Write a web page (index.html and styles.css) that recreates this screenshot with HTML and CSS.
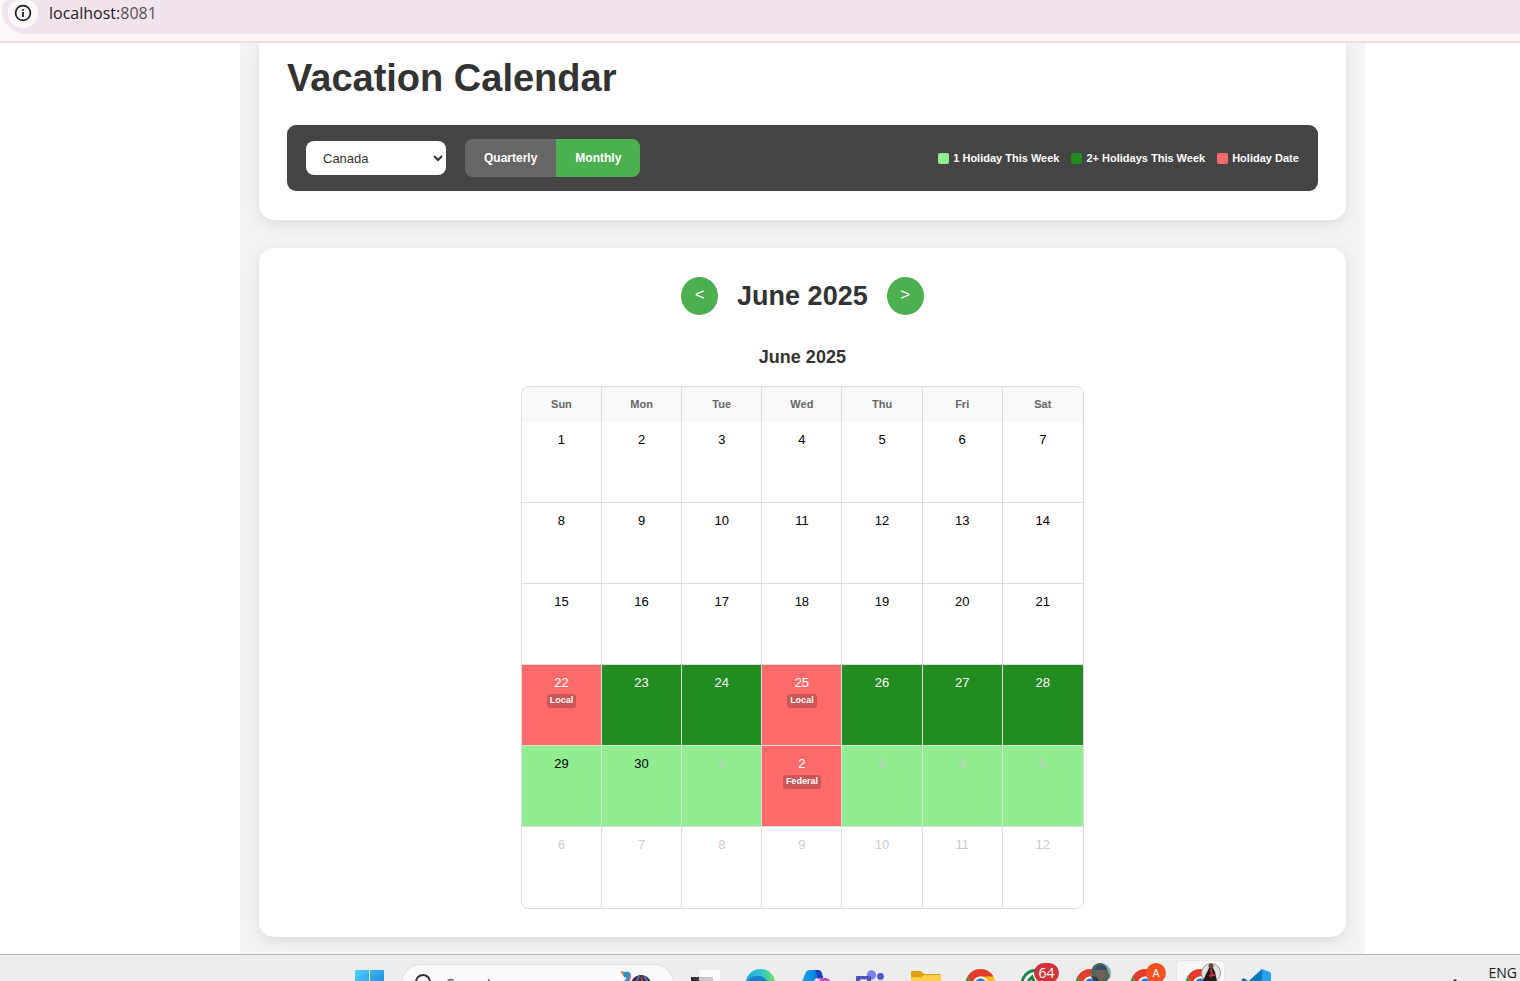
FILE: index.html
```html
<!DOCTYPE html>
<html lang="en">
<head>
<meta charset="utf-8">
<title>Vacation Calendar</title>
<link rel="stylesheet" href="styles.css">
</head>
<body>
<header class="browser-bar">
  <div class="address">
    <button class="site-info" type="button" aria-label="Site information">
      <svg width="18" height="18" viewBox="0 0 18 18"><circle cx="9" cy="9" r="7.4" fill="none" stroke="#1f1a1e" stroke-width="1.7"/><path d="M9 8v5M9 5v1.8" stroke="#1f1a1e" stroke-width="1.8"/></svg>
    </button>
    <span class="url">localhost:<span class="port">8081</span></span>
  </div>
</header>

<main class="viewport">
  <div class="container">
    <section class="card card-top">
      <h1 class="title">Vacation Calendar</h1>
      <div class="toolbar">
        <div class="controls">
          <select class="country" aria-label="Country"><option>Canada</option></select>
          <div class="toggle">
            <button type="button" class="toggle-btn">Quarterly</button>
            <button type="button" class="toggle-btn active">Monthly</button>
          </div>
        </div>
        <ul class="legend">
          <li><span class="swatch light"></span>1 Holiday This Week</li>
          <li><span class="swatch dark"></span>2+ Holidays This Week</li>
          <li><span class="swatch red"></span>Holiday Date</li>
        </ul>
      </div>
    </section>

    <section class="card card-calendar">
      <div class="month-nav">
        <button type="button" class="nav-btn" aria-label="Previous month">&lt;</button>
        <h2 class="month">June 2025</h2>
        <button type="button" class="nav-btn" aria-label="Next month">&gt;</button>
      </div>
      <h3 class="submonth">June 2025</h3>
      <table class="calendar">
        <thead><tr><th>Sun</th><th>Mon</th><th>Tue</th><th>Wed</th><th>Thu</th><th>Fri</th><th>Sat</th></tr></thead>
        <tbody>
          <tr><td>1</td><td>2</td><td>3</td><td>4</td><td>5</td><td>6</td><td>7</td></tr>
          <tr><td>8</td><td>9</td><td>10</td><td>11</td><td>12</td><td>13</td><td>14</td></tr>
          <tr><td>15</td><td>16</td><td>17</td><td>18</td><td>19</td><td>20</td><td>21</td></tr>
          <tr class="week-dark"><td class="holiday">22<span class="badge">Local</span></td><td>23</td><td>24</td><td class="holiday">25<span class="badge">Local</span></td><td>26</td><td>27</td><td>28</td></tr>
          <tr class="week-light"><td>29</td><td>30</td><td class="other">1</td><td class="holiday">2<span class="badge">Federal</span></td><td class="other">3</td><td class="other">4</td><td class="other">5</td></tr>
          <tr><td class="other">6</td><td class="other">7</td><td class="other">8</td><td class="other">9</td><td class="other">10</td><td class="other">11</td><td class="other">12</td></tr>
        </tbody>
      </table>
    </section>
  </div>
</main>

<svg width="0" height="0" class="defs">
  <defs>
    <linearGradient id="win" x1="0" y1="0" x2="1" y2="1"><stop offset="0" stop-color="#4fd0fb"/><stop offset="1" stop-color="#0a72d4"/></linearGradient>
    <linearGradient id="edge" x1="0" y1="0" x2="1" y2="0"><stop offset="0" stop-color="#1fa5dc"/><stop offset=".5" stop-color="#2fc3d0"/><stop offset="1" stop-color="#6be05a"/></linearGradient>
    <linearGradient id="cop" x1="0" y1="0" x2="1" y2="0"><stop offset="0" stop-color="#18a5e6"/><stop offset=".6" stop-color="#0b8ae4"/><stop offset="1" stop-color="#1c3fc4"/></linearGradient>
    <linearGradient id="cop2" x1="0" y1="0" x2="1" y2="0"><stop offset="0" stop-color="#e65fb0"/><stop offset="1" stop-color="#a44be8"/></linearGradient>
    <linearGradient id="task" x1="0" y1="0" x2="1" y2="0"><stop offset="0" stop-color="#2b2b2b"/><stop offset="1" stop-color="#6a6a6a"/></linearGradient>
    <g id="chrome">
      <circle cx="27.5" cy="29" r="15" fill="#fbbf16"/>
      <path d="M14.500 21.500A15 15 0 0 1 40.500 21.500H27.500A7.500 7.500 0 0 0 21 32.800z" fill="#e33b2e"/>
      <path d="M14.500 21.500L21 32.800L27.500 44A15 15 0 0 1 14.500 21.500z" fill="#26a047"/>
      <circle cx="27.500" cy="29" r="7.500" fill="#fff"/><circle cx="27.500" cy="29" r="5.800" fill="#2f7de9"/>
    </g>
  </defs>
</svg>

<footer class="taskbar">
  <svg class="slot" viewBox="0 0 55 48"><path d="M13 16q0-1 1-1h13v14H13zM28 15H41q1 0 1 1v13H28zM13 30h14v14H13zM28 30H42v14H28z" fill="url(#win)"/></svg>
  <label class="search">
    <svg width="20" height="24" viewBox="0 0 20 24"><circle cx="10" cy="13" r="7" fill="none" stroke="#333" stroke-width="2"/><path d="M5 18l-4 5" stroke="#333" stroke-width="2"/></svg>
    <input class="search-input" type="text" placeholder="Search">
    <svg width="34" height="36" viewBox="0 0 34 36"><path d="M1 2l6 1 4 1v5l-6-1z" fill="#b58763"/><path d="M5 4q5-4 7 2 0 6-4 8v10H5V12l3-3-3-1z" fill="#1799cf"/><path d="M9 4l3 4-2 4z" fill="#e2546f"/><ellipse cx="22" cy="18" rx="11" ry="12" fill="#3a2a48"/><path d="M20 7l-4 10M25 7l5 8" stroke="#5274bd" stroke-width="2"/><path d="M22 8l2 6" stroke="#9a4f49" stroke-width="2"/></svg>
  </label>
  <svg class="slot" viewBox="0 0 55 48"><path d="M13 22h24v14H13z" fill="url(#task)"/><path d="M21 15h21v20H31V25H21z" fill="#fbfbfb"/><path d="M21 22h14v12H21z" fill="#cacaca"/></svg>
  <svg class="slot" viewBox="0 0 55 48"><circle cx="27.500" cy="29" r="15" fill="url(#edge)"/><path d="M13 27Q18 20 26 21Q35 22 36 31L28 30Q23 24 20 33L22 42Q12 38 13 27z" fill="#1482cf"/><circle cx="29" cy="30" r="5" fill="#1467b5"/></svg>
  <svg class="slot" viewBox="0 0 55 48"><path d="M13 30q3-9 5-13 1-2 4-2h8q3 0 4 4l1 4h-5q-3 0-4 4l-2 9H14q-2 0-1-6z" fill="url(#cop)"/><path d="M27 15h3q3 0 4 4l1 4h-5z" fill="#1642bd"/><path d="M30 23h8q4 0 4 5l-3 13H24l4-14z" fill="url(#cop2)"/><path d="M27 25l5-1-2 7-5 1z" fill="#f4edf6"/></svg>
  <svg class="slot" viewBox="0 0 55 48"><circle cx="28.500" cy="20" r="4.700" fill="#7b83eb"/><circle cx="37.500" cy="21.500" r="3.400" fill="#5059c9"/><path d="M23 26h13v14H23z" fill="#7b83eb"/><path d="M35 26h7v10h-7z" fill="#5059c9"/><rect x="13" y="21" width="15" height="16" rx="1" fill="#4b53bc"/><path d="M17 25.500h7M20.500 25v8" stroke="#fff" stroke-width="2"/></svg>
  <svg class="slot" viewBox="0 0 55 48"><path d="M13 17q0-1 1-1h8q1 0 2 1l2 2h15q2 0 2 2v6H13z" fill="#dfa000"/><path d="M13 22h10q2 0 3-2h17v20H13z" fill="#ffcf48"/></svg>
  <svg class="slot" viewBox="0 0 55 48"><use href="#chrome"/></svg>
  <svg class="slot" viewBox="0 0 55 48"><circle cx="27.500" cy="29" r="13.500" fill="#fff" stroke="#15854c" stroke-width="3"/><path d="M20 26l4-4 3 6-2 2q2 4 6 6" fill="none" stroke="#15854c" stroke-width="3"/><rect x="26" y="8" width="25" height="20" rx="10" fill="#d13438"/><text class="count" x="38.500" y="23" text-anchor="middle">64</text></svg>
  <svg class="slot" viewBox="0 0 55 48"><use href="#chrome"/><circle cx="38" cy="18" r="10" fill="#8ba9b2"/><path d="M28 17q1-9 10-9 6 2 7 9l2 4q-3 7-9 7-9-2-10-11z" fill="#4e6950"/><path d="M31 15q2-5 8-5 4 1 5 5z" fill="#354e70"/><path d="M32 15h10v6l-4 4-5-4z" fill="#72605a"/><path d="M28 21l6 1 3 6q-6 0-9-7z" fill="#293b52"/></svg>
  <svg class="slot" viewBox="0 0 55 48"><use href="#chrome"/><circle cx="38" cy="18" r="10" fill="#f4511e"/><text class="initial" x="38" y="22" text-anchor="middle">A</text></svg>
  <svg class="slot" viewBox="0 0 55 48"><rect x="3.500" y="5.500" width="48" height="46" rx="4" fill="#f8f8f8" stroke="#e6e6e6"/><use href="#chrome"/><circle cx="38" cy="18" r="9.500" fill="#e5e3e2" stroke="#999"/><path d="M36 13l-4 8-2 5h14l-2-9-2-4z" fill="#25191c"/><circle cx="38" cy="11" r="2.500" fill="#6b453c"/><path d="M38 14l1 7M36 21l6-1" stroke="#bd3647" stroke-width="2"/></svg>
  <svg class="slot" viewBox="0 0 55 48"><path d="M34 14l8 3q1 1 1 2v20l-9 5-5-5V23z" fill="#25a4ed"/><path d="M34 14v10L18 37l-5-4z" fill="#0878bd"/><path d="M13 25l3-2 16 12v8z" fill="#0878bd"/></svg>
  <div class="tray">
    <svg width="12" height="8" viewBox="0 0 12 8"><path d="M1 6l5-5 5 5" fill="none" stroke="#222" stroke-width="1.500"/></svg>
    <span class="lang">ENG</span>
  </div>
</footer>
</body>
</html>
```

FILE: styles.css
```css
* { box-sizing: border-box; }

body {
  margin: 0;
  height: 100vh;
  display: flex;
  flex-direction: column;
  overflow: hidden;
  background: #fff;
  font-family: "Liberation Sans", Arial, sans-serif;
  color: #333;
}

button, select, input { font-family: inherit; }
h1, h2, h3, ul { margin: 0; padding: 0; }

.browser-bar {
  flex: none;
  height: 43px;
  padding-left: 2px;
  background: #fff8f8;
  border-bottom: 2px solid #efdbe6;
}
.address {
  height: 34px;
  display: flex;
  align-items: flex-start;
  gap: 11px;
  padding-left: 6px;
  background: #f1e4ee;
  border-radius: 8px 0 0 24px;
}
.site-info {
  width: 30px;
  height: 28px;
  padding: 0 0 2px;
  display: grid;
  place-items: center;
  border: 0;
  border-radius: 12px 12px 15px 15px;
  background: #fff8f8;
}
.url {
  font: 16px/26px "Open Sans", "Noto Sans", sans-serif;
  color: #1f1a1e;
}
.port { color: #5d5159; }

.viewport {
  flex: 1;
  min-height: 0;
  overflow: hidden;
}
.container {
  width: 74%;
  min-height: 100%;
  margin-left: 240px;
  padding: 0 19px 17px;
  background: #f4f4f4;
}
.card {
  padding: 29px 28px 28px;
  background: #fff;
  border-radius: 15px;
  box-shadow: 0 4px 15px rgba(0, 0, 0, 0.1);
}
.card-top {
  margin-bottom: 28px;
  padding-top: 13px;
  padding-bottom: 29px;
  border-radius: 0 0 15px 15px;
}
.title {
  margin-bottom: 25px;
  font-size: 38px;
  line-height: 44px;
}

.toolbar {
  display: flex;
  align-items: center;
  justify-content: space-between;
  padding: 14px 19px;
  background: #444;
  border-radius: 9px;
}
.controls { display: flex; align-items: center; gap: 19px; }
.country {
  width: 140px;
  height: 34px;
  padding: 0 2px 0 13px;
  border: 0;
  border-radius: 8px;
  background: #fff;
  color: #333;
  font-size: 13px;
}
.toggle {
  display: flex;
  overflow: hidden;
  border-radius: 8px;
  background: #666;
}
.toggle-btn {
  height: 38px;
  padding: 0 19px;
  border: 0;
  background: #666;
  color: #fff;
  font-size: 12px;
  font-weight: bold;
}
.toggle-btn.active { background: #4caf50; }

.legend {
  display: flex;
  gap: 12px;
  list-style: none;
  color: #fff;
  font-size: 11px;
  font-weight: bold;
}
.legend li { display: flex; align-items: center; gap: 4px; }
.swatch { width: 11px; height: 11px; border-radius: 2px; }
.swatch.light { background: #90ee90; }
.swatch.dark { background: #228b22; }
.swatch.red { background: #ff6b6b; }

.month-nav {
  display: flex;
  align-items: center;
  justify-content: center;
  gap: 19px;
  margin-bottom: 31px;
}
.month { font-size: 27px; line-height: 38px; }
.nav-btn {
  width: 37px;
  height: 38px;
  padding: 0 0 2px;
  border: 0;
  border-radius: 50%;
  background: #4caf50;
  color: #fff;
  font-size: 17px;
}
.submonth {
  margin-bottom: 18px;
  font-size: 18px;
  line-height: 22px;
  text-align: center;
}

.calendar {
  width: 563px;
  max-width: 100%;
  margin: 0 auto;
  table-layout: fixed;
  border: 1px solid #ddd;
  border-radius: 8px;
  border-collapse: separate;
  border-spacing: 0;
  overflow: hidden;
  text-align: center;
}
.calendar th {
  height: 35px;
  padding: 0 0 2px;
  background: #f8f9fa;
  border-right: 1px solid #ddd;
  color: #666;
  font-size: 11px;
}
.calendar td {
  height: 81px;
  padding: 10px 0 0;
  vertical-align: top;
  border-right: 1px solid #ddd;
  border-bottom: 1px solid #ddd;
  color: #000;
  font-size: 13px;
  line-height: 16px;
}
.calendar th:last-child, .calendar td:last-child { border-right: 0; }
.calendar tbody tr:last-child td { border-bottom: 0; }
.week-dark td { background: #228b22; color: #fff; }
.week-light td { background: #90ee90; }
.calendar td.holiday { background: #ff6b6b; color: #fff; }
.calendar td.other { color: #ccc; }
.badge {
  display: block;
  width: fit-content;
  margin: 3px auto 0;
  padding: 0 3px 2px;
  border-radius: 3px;
  background: rgba(0, 0, 0, 0.2);
  font-size: 9px;
  font-weight: bold;
  line-height: 12px;
}

.defs { position: absolute; }
.taskbar {
  flex: none;
  height: 27px;
  display: flex;
  align-items: flex-start;
  padding: 0 3px 0 342px;
  overflow: hidden;
  background: #ededed;
  border-top: 1px solid #b8b8b8;
}
.slot { flex: none; width: 55px; height: 48px; }
.search {
  flex: none;
  width: 273px;
  height: 40px;
  margin: 9px 4px 0;
  display: flex;
  align-items: flex-start;
  padding: 4px 20px 0 11px;
  border: 1px solid #dedede;
  border-radius: 20px;
  background: #fafafa;
}
.search-input {
  flex: 1;
  min-width: 0;
  height: 32px;
  padding: 0 0 0 13px;
  border: 0;
  background: transparent;
  font: 16px/32px "Open Sans", sans-serif;
}
.search-input::placeholder { color: #555; }
.count { fill: #fff; font: 14px "Open Sans", sans-serif; }
.initial { fill: #fff; font: 11px Roboto, sans-serif; }
.tray {
  margin-left: auto;
  display: flex;
  align-items: flex-start;
  gap: 28px;
  padding-top: 10px;
  color: #1b1b1b;
}
.tray svg { margin-top: 14px; }
.lang { font: 14px/16px "Open Sans", sans-serif; }
```
